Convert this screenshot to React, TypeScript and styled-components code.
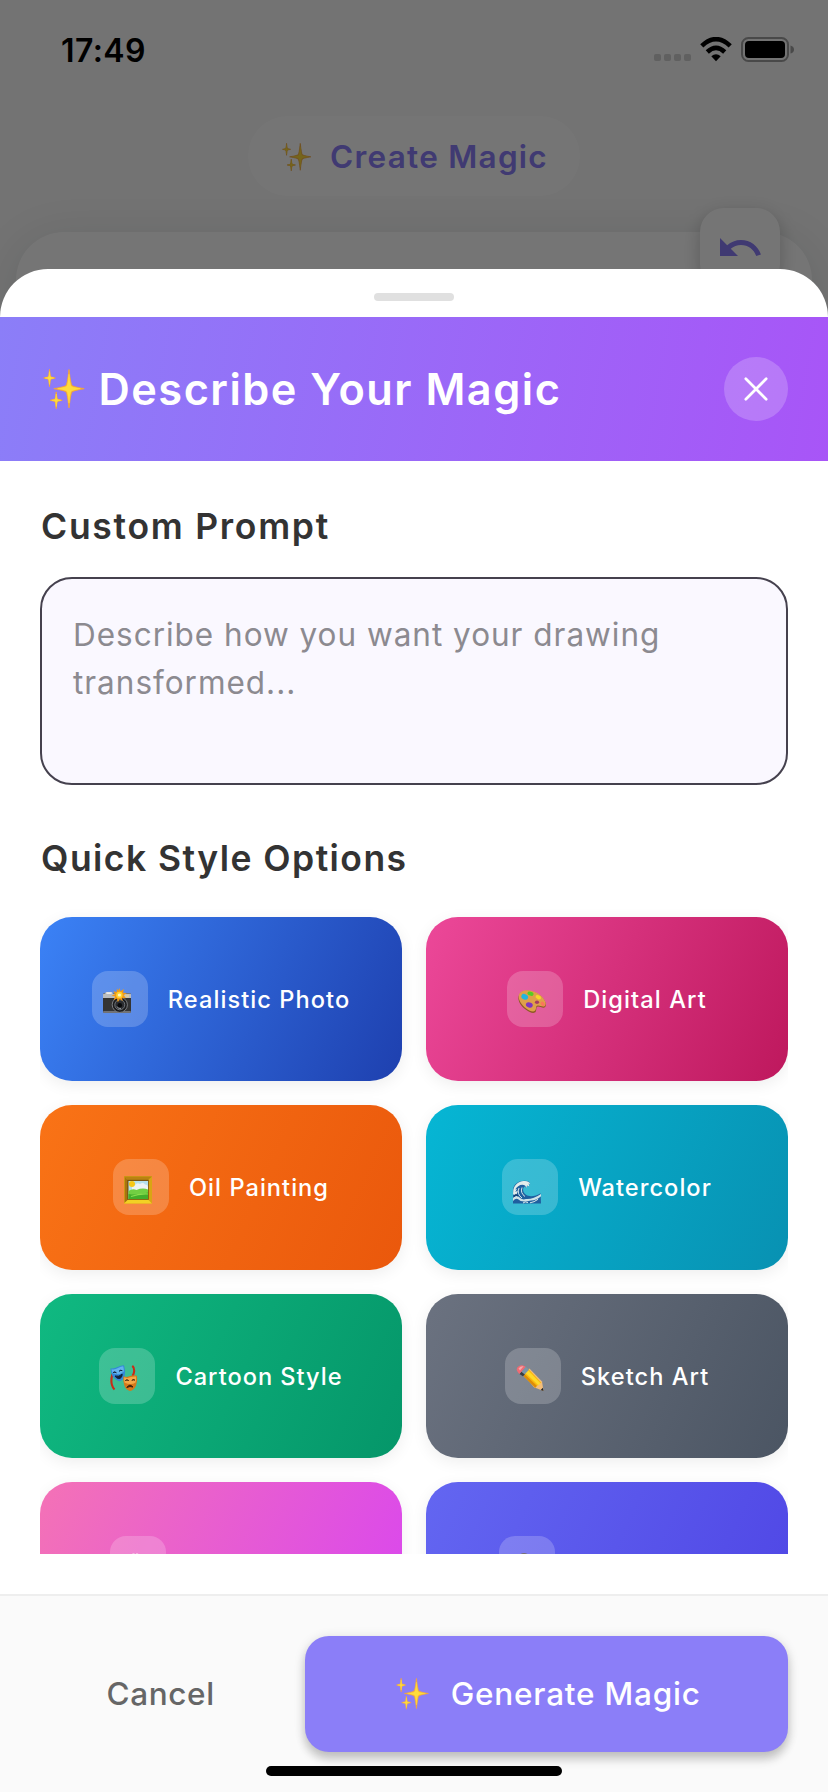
import React from 'react';
import styled, { createGlobalStyle } from 'styled-components';

const GlobalStyle = createGlobalStyle`
  * { box-sizing: border-box; }
  body { margin: 0; background: #737373; }
  button { border: 0; background: none; padding: 0; font: inherit; color: inherit; }
`;

const Screen = styled.div`
  position: relative;
  width: 828px;
  height: 1792px;
  overflow: hidden;
  font-family: Inter, 'Liberation Sans', sans-serif;
  background: #fafafa;
`;

/* ---------- page behind the sheet ---------- */

const Page = styled.div`
  display: flex;
  flex-direction: column;
  align-items: center;
  height: 100%;
  padding: 116px 16px 0;
`;

const Pill = styled.div`
  display: flex;
  align-items: center;
  width: 332px;
  height: 80px;
  padding: 2px 0 0 34px;
  gap: 18.5px;
  border-radius: 40px;
  background: #fff;
`;

const Label = styled.span<{ $size: number; $weight: number; $track: number; $color: string }>`
  font-size: ${(p) => p.$size}px;
  font-weight: ${(p) => p.$weight};
  letter-spacing: ${(p) => p.$track}px;
  color: ${(p) => p.$color};
  line-height: 1.3;
  white-space: nowrap;
`;

const Canvas = styled.div`
  position: relative;
  align-self: stretch;
  height: 900px;
  margin-top: 36px;
  border-radius: 48px;
  background: #fff;
  box-shadow: 0 8px 46px rgba(10, 40, 30, 0.13);
`;

const UndoButton = styled.button`
  position: absolute;
  top: -24px;
  right: 32px;
  display: flex;
  align-items: center;
  justify-content: center;
  width: 80px;
  height: 80px;
  border-radius: 24px;
  background: #fff;
  box-shadow: 0 6px 18px rgba(0, 0, 0, 0.22);
`;

const Scrim = styled.div`
  position: absolute;
  inset: 0;
  background: rgba(0, 0, 0, 0.54);
`;

/* ---------- status bar ---------- */

const StatusBar = styled.div`
  position: absolute;
  top: 0;
  left: 0;
  right: 0;
  display: flex;
  align-items: center;
  justify-content: space-between;
  height: 99px;
  padding: 0 34px 0 61px;
`;

const Clock = styled(Label)`
  padding-top: 2px;
`;

const StatusIcons = styled.div`
  display: flex;
  align-items: center;
  gap: 9px;
`;

const Dots = styled.div`
  display: flex;
  gap: 3px;
  padding-top: 16px;
`;

const Dot = styled.i`
  width: 7px;
  height: 7px;
  border-radius: 2px;
  background: #606060;
`;

/* ---------- bottom sheet ---------- */

const Sheet = styled.section`
  position: absolute;
  left: 0;
  right: 0;
  top: 268.5px;
  bottom: 0;
  display: flex;
  flex-direction: column;
  overflow: hidden;
  border-radius: 48px 48px 0 0;
  background: #fff;
`;

const HandleArea = styled.div`
  display: flex;
  justify-content: center;
  align-items: flex-start;
  flex: none;
  height: 48px;
  padding-top: 24px;
`;

const Handle = styled.div`
  width: 80px;
  height: 8px;
  border-radius: 4px;
  background: #e0e0e0;
`;

const Header = styled.header`
  display: flex;
  align-items: center;
  flex: none;
  height: 144px;
  padding: 0 40px 0 42.5px;
  background: linear-gradient(99.87deg, #8b7ef8, #a855f7);
`;

const HeaderTitle = styled.h1`
  flex: 1;
  margin: 0 0 0 14px;
  padding-top: 1px;
  font-size: 43.3px;
  font-weight: 600;
  letter-spacing: 1.5px;
  line-height: 54px;
  color: #fff;
  white-space: nowrap;
`;

const CloseButton = styled.button`
  display: flex;
  align-items: center;
  justify-content: center;
  width: 64px;
  height: 64px;
  border-radius: 50%;
  background: rgba(255, 255, 255, 0.2);
`;

const Body = styled.div`
  flex: 1;
  min-height: 0;
  padding: 40px;
`;

const Scroller = styled.div`
  height: 100%;
  overflow: hidden;
`;

const SectionTitle = styled.h2<{ $track: number }>`
  height: 50px;
  margin: 0;
  padding: 1px 0 0 1px;
  font-size: 35.5px;
  font-weight: 600;
  letter-spacing: ${(p) => p.$track}px;
  line-height: 50px;
  color: #333;
`;

const PromptField = styled.div`
  height: 208px;
  margin: 26px 0 48px;
  padding: 32px 31px;
  border: 2px solid #45414e;
  border-radius: 32px;
  background: #faf8ff;
  font-size: 31.5px;
  letter-spacing: 0.98px;
  line-height: 48px;
  color: #8c8a90;
`;

const Placeholder = styled.p`
  width: 640px;
  margin: 0;
`;

const StyleGrid = styled.div`
  display: grid;
  grid-template-columns: 1fr 1fr;
  grid-auto-rows: 164.55px;
  gap: 24px;
  margin-top: 34px;
`;

const StyleCard = styled.button<{ $from: string; $to: string }>`
  display: flex;
  align-items: center;
  justify-content: center;
  gap: 20px;
  border-radius: 32px;
  background: linear-gradient(114.44deg, ${(p) => p.$from}, ${(p) => p.$to});
  box-shadow: 0 4px 16px rgba(0, 0, 0, 0.07);
`;

const CardLabel = styled(Label)`
  padding-top: 3px;
`;

const IconTile = styled.span`
  display: block;
  width: 56px;
  height: 56px;
  padding: 17px 17px 11px 11px;
  border-radius: 16px;
  background: rgba(255, 255, 255, 0.2);

  svg { display: block; }
`;

const LabelSpace = styled.span<{ $width: number }>`
  width: ${(p) => p.$width}px;
`;

const Footer = styled.footer`
  display: flex;
  flex: none;
  gap: 24px;
  height: 198px;
  padding: 40px;
  border-top: 2px solid #eee;
  background: #fafafa;
`;

const CancelButton = styled.button`
  flex: 1 1 0;
  height: 116px;
`;

const GenerateButton = styled.button`
  display: flex;
  align-items: center;
  justify-content: center;
  flex: 2 1 0;
  gap: 22px;
  height: 116px;
  border-radius: 24px;
  background: #8b7ef8;
  box-shadow: 0 8px 10px rgba(0, 0, 0, 0.16), 0 2px 12px rgba(0, 0, 0, 0.14);

  svg { margin-left: 3px; }
`;

const HomeIndicator = styled.div`
  position: absolute;
  left: 266px;
  bottom: 16px;
  width: 296px;
  height: 10px;
  border-radius: 5px;
  background: #000;
`;

/* ---------- drawings ---------- */

const star = (cx: number, cy: number, w: number, h: number) => {
  const a = w * 0.2;
  const b = h * 0.18;
  return `M${cx} ${cy - h}Q${cx + a * 0.6} ${cy - b} ${cx + a} ${cy - b}Q${cx + a} ${cy - b * 0.6} ${cx + w} ${cy}Q${cx + a} ${cy + b * 0.6} ${cx + a} ${cy + b}Q${cx + a * 0.6} ${cy + b} ${cx} ${cy + h}Q${cx - a * 0.6} ${cy + b} ${cx - a} ${cy + b}Q${cx - a} ${cy + b * 0.6} ${cx - w} ${cy}Q${cx - a} ${cy - b * 0.6} ${cx - a} ${cy - b}Q${cx - a * 0.6} ${cy - b} ${cx} ${cy - h}Z`;
};

const SPARKS = [
  [26, 19.7, 15.2, 19.2],
  [6.5, 9, 5.8, 8.6],
  [13.2, 31.3, 6, 8.4],
];

function Sparkles({ width }: { width: number }) {
  return (
    <svg width={width} height={(width * 40) / 42} viewBox="0 0 42 40">
      {SPARKS.map(([x, y, w, h]) => (
        <g key={x}>
          <path d={star(x, y, w, h)} fill="#f3a63a" stroke="#f3a63a" strokeWidth="0.9" />
          <path d={star(x, y, w * 0.75, h * 0.75)} fill="#ffdc3c" stroke="#ffdc3c" strokeWidth="0.6" />
        </g>
      ))}
    </svg>
  );
}

const Camera = () => (
  <svg width="28" height="28" viewBox="0 0 28 28">
    <rect x="0" y="5" width="28" height="20" rx="1.6" fill="#343434" />
    <path d="M0 10V6.6Q0 5.4 1.2 5.4H2L3 4H9L10 5.4H26.8Q28 5.4 28 6.6V10Z" fill="#b9bcbf" />
    <path d="M3.4 4.2H8.6V6H3.4Z" fill="#ececec" />
    <path d="M22 6.5h4v3h-4z" fill="#d9c9a0" />
    <rect x="0" y="23.2" width="28" height="1.6" rx=".8" fill="#85878a" />
    <circle cx="16.8" cy="16.8" r="7.6" fill="#1c1c1d" stroke="#85888c" strokeWidth=".9" />
    <circle cx="16.8" cy="16.8" r="5" fill="#2b2d31" stroke="#70757a" strokeWidth="1" />
    <circle cx="16.8" cy="17.3" r="2.3" fill="#08090b" />
    <path d="M14 18.5q1 2.5 4 2" stroke="#b0b4b8" strokeWidth=".8" fill="none" />
    <path d="M16.2 0l1.3 3.3L20.8 1l-.7 3.7 3.5.3-3 2.2 2.5 3-3.8-.5.2 3.4-2.7-2-2 3.2-.9-3.7-3.3 1.3 1.5-3.4-3.6-.9 3.5-1.3-1.6-3 3.2.7.4-3.4 1.3 2.2Z" fill="#f49a12" />
    <circle cx="16.4" cy="7" r="3.2" fill="#ffd22e" />
    <circle cx="16.4" cy="7" r="1.6" fill="#fff7c0" />
  </svg>
);

const Palette = () => (
  <svg width="28" height="28" viewBox="0 0 28 28">
    <path d="M1.6 6C5 1.2 14 1.8 20.5 6.3c6 4.1 9 10.3 6.6 12.8-1.7 1.7-4.8-.5-7.1-.5-2.3.1-1.1 2.5-2.2 4.9-1.4 2.8-6 1.2-9.8-1.8C1.8 17.5-1.6 10.5 1.6 6Z" fill="#8c5a23" />
    <path d="M1.7 5.3C5 .8 14 1.5 20.4 5.8c6 4.1 8.8 9.9 6.5 12.1-1.7 1.6-4.8-.5-7.1-.4-2.3.1-1.2 2.5-2.3 4.6-1.4 2.6-5.6 1-9.3-1.7C2.2 16.2-1 9.4 1.7 5.3Z" fill="#dfa049" />
    <ellipse cx="19" cy="14.2" rx="2.1" ry="1.7" fill="#a83d60" />
    <ellipse cx="6.7" cy="8.8" rx="3.5" ry="2.7" transform="rotate(28 6.7 8.8)" fill="#23b5df" />
    <ellipse cx="12.5" cy="5.7" rx="3.1" ry="2" transform="rotate(18 12.5 5.7)" fill="#54cd24" />
    <ellipse cx="20.3" cy="9.2" rx="2.9" ry="1.9" transform="rotate(25 20.3 9.2)" fill="#f7d52b" />
    <ellipse cx="24.7" cy="15.8" rx="2.5" ry="1.8" transform="rotate(50 24.7 15.8)" fill="#fa765c" />
    <ellipse cx="11.3" cy="17" rx="3.5" ry="2.5" transform="rotate(15 11.3 17)" fill="#8135bd" />
  </svg>
);

const Frame = () => (
  <svg width="28" height="28" viewBox="0 0 28 28">
    <rect width="28" height="27.5" rx=".8" fill="#d9a514" />
    <path d="M0 .6H28L24 4H4Z" fill="#b98212" />
    <path d="M0 27.5L4 23.5H24L28 27.5Z" fill="#f2d124" />
    <path d="M.7 1L4 4V23.5L.7 26.5Z" fill="#a87310" />
    <rect x="3.2" y="3.8" width="21.6" height="20" fill="#7a5510" />
    <rect x="4.5" y="5" width="19.5" height="18" fill="#b5e0ec" />
    <path d="M8 12q0-3 3-3 2-3 5-1 3-2 5 .5 3 0 3 3V15H8Z" fill="#edf2f2" />
    <circle cx="8" cy="8" r="3" fill="#f7c716" />
    <path d="M4.5 15q4-3 8-1 6-2.5 11.5-.5V23H4.5Z" fill="#72cf42" />
    <path d="M4.5 18q9 1.5 19.5-1.5V23H4.5Z" fill="#43ae2b" />
    <path d="M7 20.5q8-3 17-2.5" stroke="#8add4d" strokeWidth="1.2" fill="none" />
  </svg>
);

const Wave = () => (
  <svg width="28" height="28" viewBox="0 0 28 28">
    <path d="M0 27.5V13C1 8 5.5 5 10 5c4-.6 6.8.6 7.3 3.2l-1.700-.6.8 3-2.4-1.2-.5 2.600-1.800-1.500c-2.500 1.500-2 6 1.300 8.300C17 21.500 23 20 27.600 17.200L28 27.500Z" fill="#1f5f9f" />
    <path d="M.3 14C1.500 8.500 6 5.200 10.500 5c3.500-.5 6.500.8 6.800 3.200l-1.700-.6.8 3-2.400-1.200-.5 2.600-1.500-2.600C8.500 7.500 4 10 2.200 13.500L4 12.700 2.300 16l2.600-1.600L3.500 19 0 18.500Z" fill="#e1edeb" />
    <path d="M6 12q-2.500 6 3 10M9 11.500q-2 5.500 3 9" stroke="#d9e9eb" strokeWidth="1" fill="none" />
    <path d="M0 22q3-3.500 6-1 3 3.500 7 2 7 .5 15-5v2.200q-5 4.300-10 4.300Q8 27 5.500 23.500 3 21.500 0 25Z" fill="#cfe3e8" />
    <path d="M10 27q2-2 5-.5M17 26.800q4-.5 8-3.500" stroke="#d9e9eb" strokeWidth="1" fill="none" />
    <path d="M1 20.500l2-2 2 1.500" stroke="#123b70" strokeWidth="1.2" fill="none" />
  </svg>
);

const Masks = () => (
  <svg width="28" height="28" viewBox="0 0 28 28">
    <path d="M2.4 9Q.6 16 2 20q.8 3 2.500 4.500M22.300.8q2 1.500 1.900 5.200-.2 3-1.700 5" stroke="#c92c16" strokeWidth="2.1" fill="none" />
    <path d="M.5 3.200Q4 4 7.500 2 11 .5 14 .2q1.600 5.600.8 10Q13.500 15 9.600 16.200 5 15 2.400 11 .7 7.500.5 3.200Z" fill="#3388d8" />
    <path d="M1.500 4.200Q5 5 8 3q3-1.500 5.200-1.700.8 3 .6 5.200Q9 11 2.500 8Z" fill="#62b3ee" />
    <path d="M3 7.600q1.800-1.600 3.500.3M9 6.300q1.500-1.800 3.400-.6M5 11q4 1.200 7.200-1.800-.3 4.200-3.300 4.400Q6.500 13.600 5 11Z" stroke="#10243a" strokeWidth="1" fill="#10243a" />
    <path d="M13.300 11.200q3.500 1.500 7-.1 3.300-1.500 6.700-.4.700 6-1 10-2 4.500-6 5.300-4-1-5.700-5.500-1.300-4-1-9.300Z" fill="#d6781c" />
    <path d="M14.200 12.200q3.500 1.500 6.800-.1 2.500-1 5-.6.300 3.500-.4 6-4.500 3-11 .2-.7-2.500-.4-5.500Z" fill="#f4a847" />
    <path d="M15.200 15.600q1.700-1.800 3.600 0M21.700 15.400q1.800-1.700 3.300-.2M16.800 22.500q3-4.300 6.200-.5-3-1.200-6.200.5Z" stroke="#40200c" strokeWidth="1" fill="#40200c" />
  </svg>
);

const Pencil = () => (
  <svg width="28" height="28" viewBox="0 0 28 28">
    <path d="M7.8 9.5L13.4 3.6 26 16.5 27.5 26 18 22.2Z" fill="#f3bd7a" />
    <path d="M6.2 9.8L12 3.6 25.4 17.8Q22.6 18 22.4 20.2 20 20 19.2 22.8Z" fill="#f9b90f" />
    <path d="M9.5 8L12 5.2 24.5 18.2 22.4 20.2Z" fill="#ffda2b" />
    <path d="M6.2 9.8L7.7 8.2 21 21 19.2 22.8Z" fill="#dd8c09" />
    <path d="M3.4 8.9L9.7 1.7 13 4.7 6.9 11.3Z" fill="#7895a8" />
    <path d="M3.4 8.9L5.3 6.7 8.8 9.5 6.9 11.3Z" fill="#383e43" />
    <path d="M1.2 6Q-.5 3.2 3 1 6.5-1 9.7 1.7L3.4 8.9Q1.8 7.7 1.2 6Z" fill="#ee6b74" />
    <path d="M2.5 3.5Q4.5.8 7.6 1.2L4 5.5Z" fill="#f9a7a8" />
    <path d="M27.5 26L26.8 22.8 24.7 25Z" fill="#252525" />
  </svg>
);

const SparkTips = () => (
  <svg width="28" height="28" viewBox="0 0 28 28">
    <path d="M11 .8L12.3-.5H13.6V.8ZM15 .8V-.5H16.3L17.5.8Z" fill="#f7c7e5" />
  </svg>
);

const RoundTop = () => (
  <svg width="28" height="28" viewBox="0 0 28 28">
    <path d="M10.5 1Q14-1 17.5 1Z" fill="#77706f" />
  </svg>
);

type CardData = {
  from: string;
  to: string;
  icon: React.ReactNode;
  label?: string;
  track?: number;
  space?: number;
};

const CARDS: CardData[] = [
  { from: '#3b82f6', to: '#1e40af', icon: <Camera />, label: 'Realistic Photo', track: 1.06 },
  { from: '#ec4899', to: '#be185d', icon: <Palette />, label: 'Digital Art', track: 1.1 },
  { from: '#f97316', to: '#ea580c', icon: <Frame />, label: 'Oil Painting', track: 1.03 },
  { from: '#06b6d4', to: '#0891b2', icon: <Wave />, label: 'Watercolor', track: 1.03 },
  { from: '#10b981', to: '#059669', icon: <Masks />, label: 'Cartoon Style', track: 0.99 },
  { from: '#6b7280', to: '#4b5563', icon: <Pencil />, label: 'Sketch Art', track: 1.06 },
  { from: '#f472b6', to: '#d946ef', icon: <SparkTips />, space: 146 },
  { from: '#6366f1', to: '#4f46e5', icon: <RoundTop />, space: 140.5 },
];

export default function App() {
  return (
    <Screen>
      <GlobalStyle />
      <Page>
        <Pill>
          <Sparkles width={29.5} />
          <Label $size={31.5} $weight={600} $track={1.26} $color="#8b7ef8">Create Magic</Label>
        </Pill>
        <Canvas>
          <UndoButton aria-label="Undo">
            <svg width="48" height="48" viewBox="0 0 24 24">
              <path fill="#8b7ef8" d="M12.5 8c-2.65 0-5.05.99-6.9 2.6L2 7v9h9l-3.62-3.62c1.39-1.16 3.16-1.88 5.12-1.88 3.54 0 6.55 2.31 7.6 5.5l2.37-.78C21.08 11.03 17.15 8 12.5 8z" />
            </svg>
          </UndoButton>
        </Canvas>
      </Page>
      <Scrim />

      <StatusBar>
        <Clock $size={32} $weight={600} $track={0.4} $color="#000">17:49</Clock>
        <StatusIcons>
          <Dots><Dot /><Dot /><Dot /><Dot /></Dots>
          <svg width="32" height="25" viewBox="0 0 32 25">
            <path d="M1.8 8.9Q16-4.5 30.2 8.9" stroke="#000" strokeWidth="4.6" fill="none" />
            <path d="M7.3 15Q16 6.8 24.7 15" stroke="#000" strokeWidth="4.6" fill="none" />
            <path d="M11.3 19.3Q16 15.2 20.7 19.3L16 24.3Z" />
          </svg>
          <svg width="53" height="25" viewBox="0 0 53 25">
            <rect x="1" y="1" width="46" height="23" rx="6.5" fill="none" stroke="#494949" strokeWidth="2" />
            <rect x="4" y="4" width="40" height="17" rx="4" />
            <path d="M49.5 8.5Q53 9.5 53 12.5T49.5 16.5Z" fill="#494949" />
          </svg>
        </StatusIcons>
      </StatusBar>

      <Sheet>
        <HandleArea><Handle /></HandleArea>
        <Header>
          <Sparkles width={42} />
          <HeaderTitle>Describe Your Magic</HeaderTitle>
          <CloseButton aria-label="Close">
            <svg width="24" height="24" viewBox="0 0 24 24">
              <path d="M1.8 1.8L22.2 22.2M22.2 1.8L1.8 22.2" stroke="#fff" strokeWidth="2.7" strokeLinecap="round" />
            </svg>
          </CloseButton>
        </Header>
        <Body>
          <Scroller>
            <SectionTitle $track={1.72}>Custom Prompt</SectionTitle>
            <PromptField>
              <Placeholder>Describe how you want your drawing transformed...</Placeholder>
            </PromptField>
            <SectionTitle $track={1.45}>Quick Style Options</SectionTitle>
            <StyleGrid>
              {CARDS.map((c) => (
                <StyleCard key={c.from} $from={c.from} $to={c.to}>
                  <IconTile>{c.icon}</IconTile>
                  {c.label ? (
                    <CardLabel $size={23.6} $weight={500} $track={c.track ?? 1} $color="#fff">{c.label}</CardLabel>
                  ) : (
                    <LabelSpace $width={c.space ?? 140} />
                  )}
                </StyleCard>
              ))}
            </StyleGrid>
          </Scroller>
        </Body>
        <Footer>
          <CancelButton>
            <Label $size={31.5} $weight={500} $track={0.6} $color="#666">Cancel</Label>
          </CancelButton>
          <GenerateButton>
            <Sparkles width={33} />
            <Label $size={31.5} $weight={500} $track={0.78} $color="#fff">Generate Magic</Label>
          </GenerateButton>
        </Footer>
      </Sheet>
      <HomeIndicator />
    </Screen>
  );
}
